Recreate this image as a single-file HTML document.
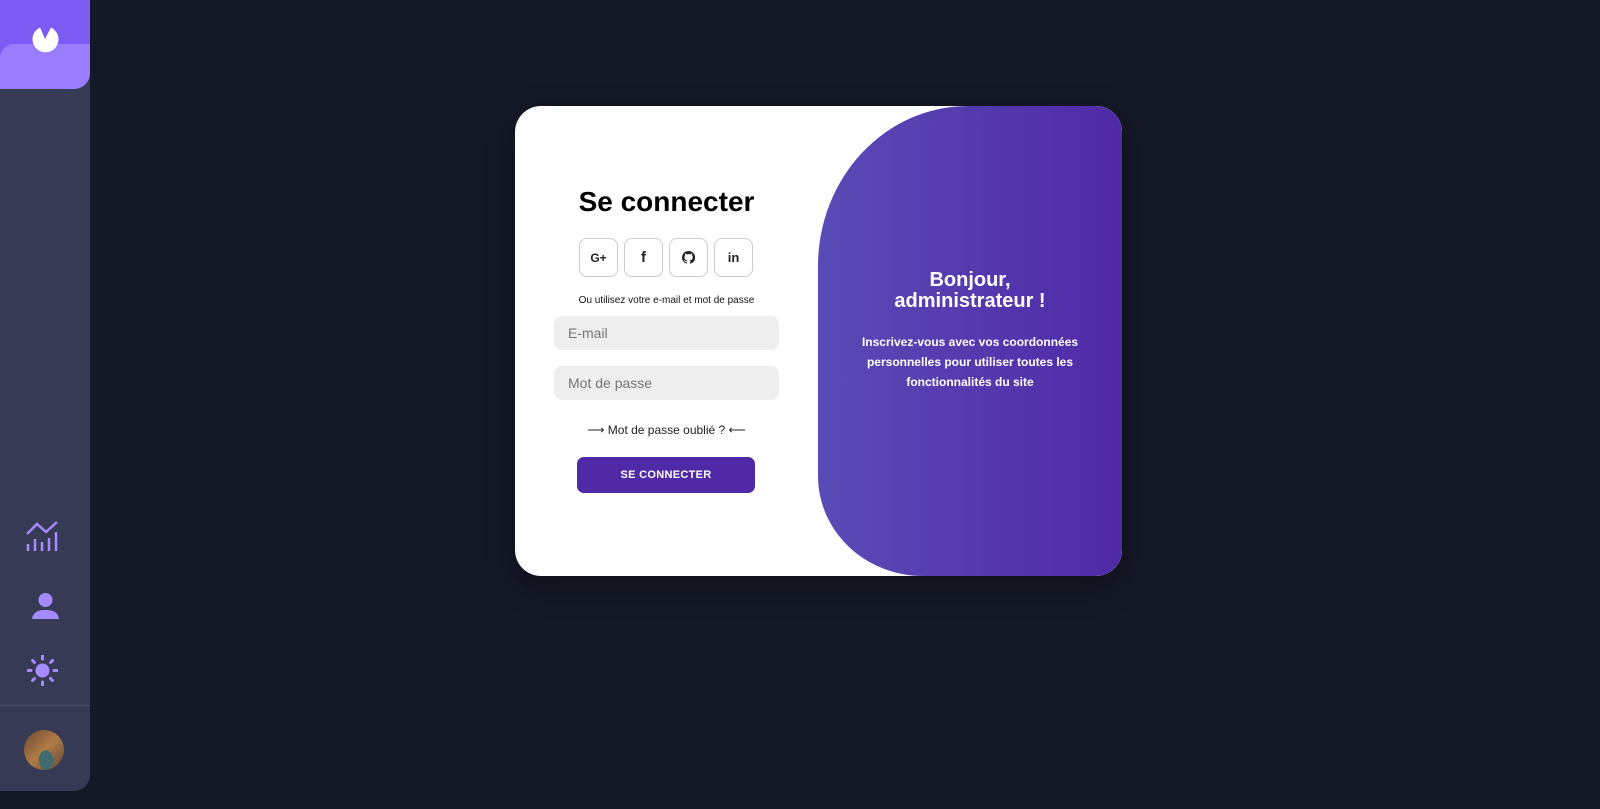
<!DOCTYPE html>
<html><head><meta charset="utf-8"><style>
*{box-sizing:border-box;margin:0;padding:0}
body{width:1600px;height:809px;background:#151826;font-family:"Liberation Sans",sans-serif;position:relative;overflow:hidden}
.side{position:absolute;left:0;top:0;width:90px;height:791px;background:#373a55;border-radius:0 0 16px 0}
.logo{position:absolute;left:0;top:0;width:90px;height:89px;background:#7b5cf5;border-radius:0 0 16px 0;overflow:hidden}
.logo .b{position:absolute;left:0;top:44px;width:90px;height:60px;background:#9a7dff;border-radius:14px 0 0 0}
.sep{position:absolute;left:0;top:705px;width:90px;height:1px;background:#4d5070}
.av{position:absolute;left:24px;top:730px;width:40px;height:40px;border-radius:50%;background:radial-gradient(ellipse at 55% 75%,#3f6a70 0 22%,transparent 24%),linear-gradient(135deg,#6b4a33,#b07a45 50%,#5b4a3a)}
.card{position:absolute;left:515px;top:106px;width:607px;height:470px;background:#fff;border-radius:26px;overflow:hidden;box-shadow:0 10px 30px rgba(0,0,0,.35)}
.panel{position:absolute;left:303px;top:0;width:304px;height:470px;background:linear-gradient(90deg,#5a4bb6,#5029a6);border-radius:150px 26px 26px 105px/160px 26px 26px 100px;color:#fff;text-align:center}
.panel h2{position:absolute;top:164px;left:0;width:304px;font-size:20px;line-height:21px;font-weight:bold}
.panel p{position:absolute;top:226px;left:30px;width:244px;font-size:12px;line-height:20px;font-weight:bold}
h1{position:absolute;left:0;width:303px;top:80px;text-align:center;font-size:28px;font-weight:bold;color:#000}
.soc{position:absolute;top:132px;left:64px;display:flex;gap:6px}
.soc div{width:39px;height:39px;border:1px solid #ccc;border-radius:8px;display:flex;align-items:center;justify-content:center;font-size:12px;font-weight:bold;color:#222}
.or{position:absolute;top:189px;left:0;width:303px;text-align:center;font-size:10px;color:#111}
.in{position:absolute;left:39px;width:225px;height:34px;background:#eee;border-radius:8px;padding-left:14px;line-height:34px;font-size:14px;color:#757575}
.fg{position:absolute;top:317px;width:303px;left:0;text-align:center;font-size:12px;color:#222}
.btn{position:absolute;left:62px;top:351px;width:178px;height:36px;background:#5029a6;border-radius:7px;color:#fff;font-size:11px;font-weight:bold;text-align:center;line-height:36px;letter-spacing:.3px}
</style></head><body>
<div class="side">
<div class="logo"><div class="b"></div>
<svg style="position:absolute;left:31px;top:26px" width="28" height="28" viewBox="0 0 28 28"><path d="M9 1.5A13 13 0 1 0 20 1.5L14 13Z" fill="#fff"/></svg></div>
<svg style="position:absolute;left:26px;top:520px" width="33" height="31" viewBox="0 0 33 31" fill="none" stroke="#a58bff" stroke-width="2.5"><path d="M1 14L11 4l9 8L31 2"/><path d="M2 24v7M9 19v12M16 22v9M23 18v13M30 12v19" stroke-width="2.5"/></svg>
<svg style="position:absolute;left:32px;top:592px" width="27" height="28" viewBox="0 0 27 28" fill="#a58bff"><circle cx="13.5" cy="8" r="7"/><path d="M0 27c1-7 6-9 13.5-9S26 20 27 27Z"/></svg>
<svg style="position:absolute;left:27px;top:655px" width="31" height="31" viewBox="0 0 31 31" fill="#a58bff" stroke="#a58bff" stroke-width="3" stroke-linecap="round"><circle cx="15.5" cy="15.5" r="7" stroke="none"/><path d="M15.5 1v3M15.5 27v3M1 15.5h3M27 15.5h3M5.5 5.5l2 2M23.5 23.5l2 2M5.5 25.5l2-2M23.5 7.5l2-2"/></svg>
<div class="sep"></div><div class="av"></div>
</div>
<div class="card">
<h1>Se connecter</h1>
<div class="soc"><div>G+</div><div style="font-size:15px">f</div><div><svg width="13" height="13" viewBox="0 0 16 16"><path fill="#222" d="M8 0a8 8 0 0 0-2.5 15.6c.4 0 .5-.2.5-.4v-1.4c-2.2.5-2.7-1-2.7-1-.4-.9-.9-1.2-.9-1.2-.7-.5.1-.5.1-.5.8.1 1.200.8 1.2.8.7 1.3 1.9.9 2.4.7 0-.5.3-.9.5-1.1-1.8-.2-3.6-.9-3.6-4 0-.9.3-1.6.8-2.1-.1-.2-.4-1 .1-2.1 0 0 .7-.2 2.2.8a7.5 7.5 0 0 1 4 0c1.5-1 2.2-.8 2.2-.8.4 1.1.2 1.900.1 2.1.5.6.8 1.3.8 2.1 0 3.1-1.9 3.8-3.6 4 .3.3.5.8.5 1.5v2.2c0 .2.1.5.6.4A8 8 0 0 0 8 0z"/></svg></div><div style="font-size:13px">in</div></div>
<div class="or">Ou utilisez votre e-mail et mot de passe</div>
<div class="in" style="top:210px">E-mail</div>
<div class="in" style="top:260px">Mot de passe</div>
<div class="fg">⟶ Mot de passe oublié ? ⟵</div>
<div class="btn">SE CONNECTER</div>
<div class="panel"><h2>Bonjour,<br>administrateur !</h2><p>Inscrivez-vous avec vos coordonnées personnelles pour utiliser toutes les fonctionnalités du site</p></div>
</div>
</body></html>
